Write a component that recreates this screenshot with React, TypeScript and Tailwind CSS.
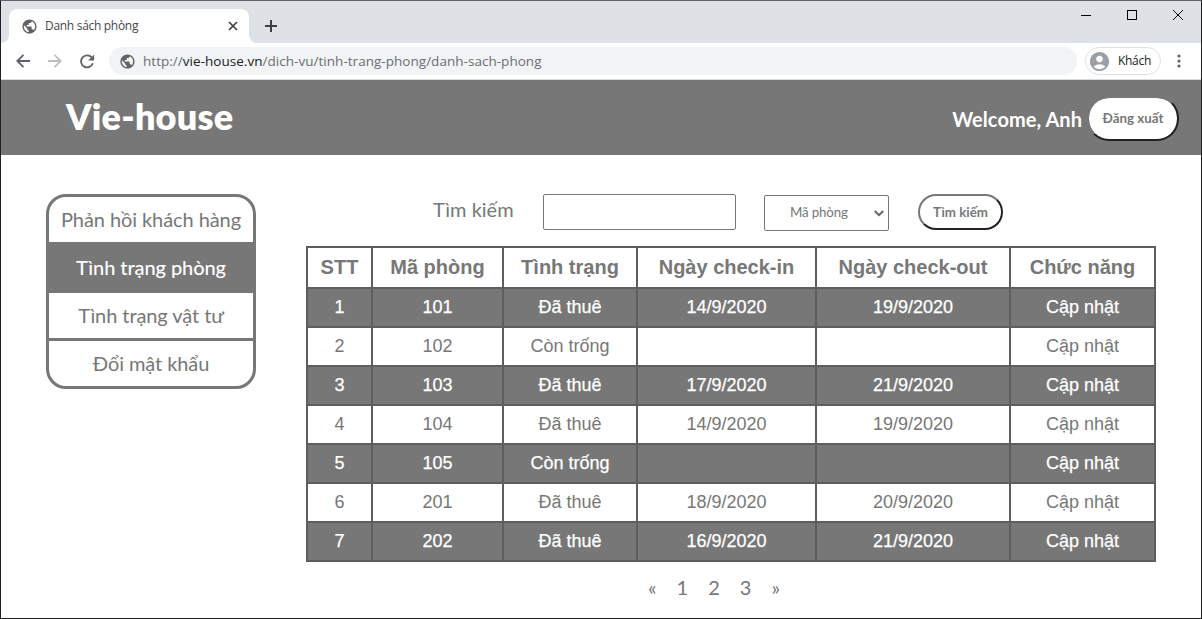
import React from "react";
import { MdAccountCircle, MdPublic } from "react-icons/md";

type Room = { id: string; status: string; checkIn: string; checkOut: string };

const rooms: Room[] = [
  { id: "101", status: "Đã thuê", checkIn: "14/9/2020", checkOut: "19/9/2020" },
  { id: "102", status: "Còn trống", checkIn: "", checkOut: "" },
  { id: "103", status: "Đã thuê", checkIn: "17/9/2020", checkOut: "21/9/2020" },
  { id: "104", status: "Đã thuê", checkIn: "14/9/2020", checkOut: "19/9/2020" },
  { id: "105", status: "Còn trống", checkIn: "", checkOut: "" },
  { id: "201", status: "Đã thuê", checkIn: "18/9/2020", checkOut: "20/9/2020" },
  { id: "202", status: "Đã thuê", checkIn: "16/9/2020", checkOut: "21/9/2020" },
];

const menu = ["Phản hồi khách hàng", "Tình trạng phòng", "Tình trạng vật tư", "Đổi mật khẩu"];

function Globe() {
  return <MdPublic className="-mx-[1.5px] size-[17px] shrink-0 text-[#5f6368]" />;
}

function BrowserChrome() {
  return (
    <div className="font-['Open_Sans','Noto_Sans',sans-serif]">
      <div className="flex h-[42px] items-end bg-[#dee1e6]">
        <div className="flex h-2 w-2 bg-white">
          <div className="size-2 rounded-br-lg bg-[#dee1e6]" />
        </div>
        <div className="flex h-[34px] w-[240px] items-center rounded-t-lg bg-white pl-[13px] pr-[11px]">
          <Globe />
          <span className="ml-[9px] flex-1 whitespace-nowrap text-[12px] tracking-[-0.3px] text-[#45484c]">Danh sách phòng</span>
          <svg className="size-[10px]" viewBox="0 0 10 10" stroke="#3c4043" strokeWidth="1.7">
            <path d="M1 1 L9 9 M9 1 L1 9" />
          </svg>
        </div>
        <div className="h-2 w-2 bg-white">
          <div className="size-2 rounded-bl-lg bg-[#dee1e6]" />
        </div>
        <svg className="mb-[11px] ml-2 size-3" viewBox="0 0 12 12" stroke="#3c4043" strokeWidth="2">
          <path d="M6 0 V12 M0 6 H12" />
        </svg>
        <div className="mb-[23px] ml-auto mr-[18px] flex gap-9">
          <svg className="size-[10px]" viewBox="0 0 10 10" stroke="#000" shapeRendering="crispEdges">
            <path d="M0 5.5 H10" />
          </svg>
          <svg className="size-[10px]" viewBox="0 0 10 10" stroke="#000" fill="none" shapeRendering="crispEdges">
            <rect x=".5" y=".5" width="9" height="9" />
          </svg>
          <svg className="size-[10px]" viewBox="0 0 10 10" stroke="#000">
            <path d="M0 0 L10 10 M10 0 L0 10" />
          </svg>
        </div>
      </div>
      <div className="flex h-[37px] items-center border-b border-[#d8dadd] bg-white pl-[15px]">
        <svg className="size-[14px]" viewBox="0 0 14 14" stroke="#5f6368" strokeWidth="1.8" fill="none">
          <path d="M14 7 H1.5 M7.5 .8 L1.3 7 L7.5 13.2" />
        </svg>
        <svg className="ml-[18px] size-[14px]" viewBox="0 0 14 14" stroke="#bdbfc2" strokeWidth="1.8" fill="none">
          <path d="M0 7 H12.5 M6.5 .8 L12.7 7 L6.5 13.2" />
        </svg>
        <svg className="ml-[18px] size-[15px]" viewBox="0 0 15 15" stroke="#5f6368" strokeWidth="1.8" fill="none">
          <path d="M12.8 9.2 A6 6 0 1 1 11.6 3.4" />
          <path d="M14.1 .6 V6.6 H8.1 Z" fill="#5f6368" stroke="none" />
        </svg>
        <div className="ml-[14px] flex h-7 w-[968px] items-center rounded-full bg-[#f1f3f4] pl-[11px] text-[13.5px] tracking-[0.03px] text-[#6b6f73]">
          <Globe />
          <span className="ml-[9px] whitespace-nowrap">
            http://<span className="text-[#202124]">vie-house.vn</span>/dich-vu/tinh-trang-phong/danh-sach-phong
          </span>
        </div>
        <div className="ml-2 flex h-7 w-[76px] items-center rounded-full border border-[#dfe1e5] pl-0.5">
          <MdAccountCircle className="size-[23px] shrink-0 text-[#9aa0a6]" />
          <span className="ml-[7px] text-[12px] tracking-[-0.3px] text-[#202124]">Khách</span>
        </div>
        <svg className="ml-[16px] h-[14px] w-1" viewBox="0 0 4 14" fill="#5f6368">
          <circle cx="2" cy="2" r="1.6" />
          <circle cx="2" cy="7" r="1.6" />
          <circle cx="2" cy="12" r="1.6" />
        </svg>
      </div>
    </div>
  );
}

function Header() {
  return (
    <header className="flex h-[75px] items-center bg-[#777] pl-[65px] pr-[22px] text-white">
      <h1 className="pb-1 text-[36px] font-extrabold leading-none tracking-[0.2px]">Vie-house</h1>
      <span className="ml-auto mr-[5px] mt-0.5 text-[20px] font-bold tracking-[0.05px]">Welcome, Anh</span>
      <button className="mt-px h-[45px] w-[92px] rounded-[22px] border-2 border-b-[#212121] border-l-[#777] border-r-[#212121] border-t-[#777] bg-white bg-clip-padding pt-0.5 text-[13.33px] font-bold text-[#777]">
        Đăng xuất
      </button>
    </header>
  );
}

function Sidebar() {
  return (
    <nav className="flex h-[195px] w-[210px] flex-col gap-[3px] overflow-hidden rounded-[20px] border-[3px] border-[#777] bg-[#777] text-center text-[20px] tracking-[-0.08px]">
      {menu.map((label, i) => (
        <a key={label} className={i === 1 ? "h-[45px] whitespace-nowrap bg-[#777] font-medium leading-[44px] text-white" : "h-[45px] whitespace-nowrap bg-white leading-[44px]"}>
          {label}
        </a>
      ))}
    </nav>
  );
}

function SearchBar() {
  return (
    <div className="flex h-[37px] items-start pl-[127px]">
      <label className="w-[110px] text-[20px] leading-[30px]">Tìm kiếm</label>
      <input className="h-9 w-[193px] rounded-[2px] border border-[#777] bg-white" />
      <div className="ml-7 mt-px flex h-9 w-[125px] items-center justify-between rounded-[2px] border border-[#777] pl-[25px] pr-1 text-[13.33px] tracking-[-0.15px]">
        <span>Mã phòng</span>
        <svg className="size-[10px]" viewBox="0 0 10 10" fill="none" stroke="#666" strokeWidth="2">
          <path d="M.8 3 L5 7.2 L9.2 3" />
        </svg>
      </div>
      <button className="ml-[29px] h-9 w-[85px] rounded-[20px] border-2 border-b-[#212121] border-l-[#777] border-r-[#212121] border-t-[#777] bg-white pt-0.5 text-[13.33px] font-bold">
        Tìm kiếm
      </button>
    </div>
  );
}

function RoomTable() {
  const cell = "border-2 border-[#5e5e5e] p-0 pb-0.5";
  return (
    <table className="mt-[15px] w-[850px] table-fixed border-collapse text-center font-['Liberation_Sans',Arial,sans-serif] text-[18px] leading-none">
      <colgroup>
        <col className="w-[65px]" />
        <col className="w-[131px]" />
        <col className="w-[134px]" />
        <col className="w-[179px]" />
        <col className="w-[194px]" />
        <col className="w-[145px]" />
      </colgroup>
      <thead>
        <tr className="h-[41px] text-[20px]">
          {["STT", "Mã phòng", "Tình trạng", "Ngày check-in", "Ngày check-out", "Chức năng"].map((h) => (
            <th key={h} className={cell}>{h}</th>
          ))}
        </tr>
      </thead>
      <tbody>
        {rooms.map((r, i) => (
          <tr key={r.id} className={i % 2 === 0 ? "h-[39px] bg-[#777] text-white [-webkit-text-stroke:0.25px_white]" : "h-[39px]"}>
            {[String(i + 1), r.id, r.status, r.checkIn, r.checkOut, "Cập nhật"].map((v, c) => (
              <td key={c} className={cell}>{v}</td>
            ))}
          </tr>
        ))}
      </tbody>
    </table>
  );
}

export default function App() {
  return (
    <div className="h-[619px] w-[1202px] overflow-hidden border border-[#1f1f1f] border-t-[#626467] bg-white font-['Lato','Liberation_Sans',sans-serif] text-[#777]">
      <BrowserChrome />
      <Header />
      <main className="flex pl-[45px] pt-[39px]">
        <Sidebar />
        <section className="ml-[50px] w-[850px]">
          <SearchBar />
          <RoomTable />
          <div className="mt-[9px] flex gap-5 pl-[342px] text-[20px] leading-8">
            <span>«</span>
            <span>1</span>
            <span>2</span>
            <span>3</span>
            <span>»</span>
          </div>
        </section>
      </main>
    </div>
  );
}
